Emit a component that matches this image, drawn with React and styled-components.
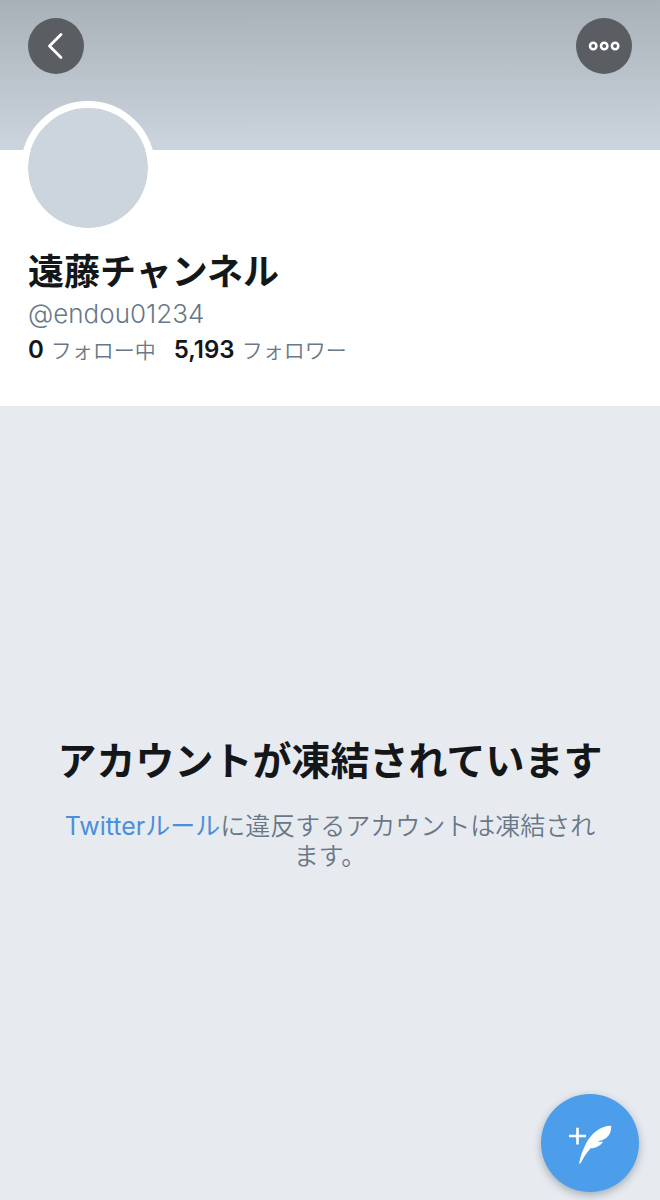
import React from "react";
import styled, { createGlobalStyle } from "styled-components";

const GlobalStyle = createGlobalStyle`
  *, *::before, *::after { box-sizing: border-box; }
  body {
    margin: 0;
    background: #e7ebf0;
    color: #14171a;
    font-family: Inter, "Noto Sans CJK JP", sans-serif;
  }
`;

const Page = styled.div`
  display: flex;
  flex-direction: column;
  min-height: 100vh;
`;

const Banner = styled.header`
  display: flex;
  justify-content: space-between;
  align-items: flex-start;
  height: 150px;
  padding: 18px 28px;
  background: linear-gradient(#a8b0b8, #ccd4dd);
`;

const RoundButton = styled.button`
  display: flex;
  align-items: center;
  justify-content: center;
  width: 56px;
  height: 56px;
  padding: 0;
  border: 0;
  border-radius: 50%;
  background: #5a5e62;
  color: #fff;
  cursor: pointer;
`;

const Profile = styled.section`
  padding: 0 28px 37px;
  background: #fff;
`;

const Avatar = styled.div`
  width: 134px;
  height: 134px;
  margin: -49px 0 0 -7px;
  border: 7px solid #fff;
  border-radius: 50%;
  background: #ccd4dd;
  background-clip: padding-box;
`;

const Name = styled.h1`
  margin: 13px 0 0;
  font-size: 36px;
  line-height: 48px;
  font-weight: 700;
`;

const Handle = styled.p`
  margin: 0;
  color: #697887;
  font-size: 26px;
  line-height: 36px;
  font-weight: 350;
`;

const Stats = styled.div`
  display: flex;
  flex-wrap: wrap;
  gap: 18px;
`;

const Stat = styled.a`
  display: flex;
  gap: 7px;
  align-items: baseline;
  color: #697887;
  font-size: 21px;
  line-height: 36px;
  font-weight: 350;
  text-decoration: none;
`;

const Count = styled.strong`
  color: #14171a;
  font-size: 24px;
  font-weight: 600;
`;

const Notice = styled.main`
  display: flex;
  flex: 1;
  flex-direction: column;
  align-items: center;
  justify-content: center;
  gap: 26px;
  padding: 26px 56px 24px;
  text-align: center;
`;

const NoticeTitle = styled.h2`
  margin: 0;
  font-size: 39px;
  line-height: 48px;
  font-weight: 700;
`;

const NoticeText = styled.p`
  margin: 0;
  color: #697887;
  font-size: 25px;
  line-height: 30px;
  font-weight: 350;
`;

const RulesLink = styled.a`
  color: #4a90d9;
  font-weight: 400;
  text-decoration: none;
`;

const ComposeButton = styled(RoundButton)`
  position: fixed;
  right: 21px;
  bottom: 8px;
  width: 98px;
  height: 98px;
  background: #4c9eeb;
  box-shadow: 0 3px 8px rgba(60, 75, 90, 0.4);
`;

const BackIcon = () => (
  <svg width="56" height="56" viewBox="0 0 56 56" fill="none" aria-hidden="true">
    <path
      d="M33 16.5 21.5 28 33 39.5"
      stroke="currentColor"
      strokeWidth="2.8"
      strokeLinecap="round"
      strokeLinejoin="round"
    />
  </svg>
);

const MoreIcon = () => (
  <svg width="56" height="56" viewBox="0 0 56 56" fill="none" aria-hidden="true">
    <g stroke="currentColor" strokeWidth="2.5">
      <circle cx="17.2" cy="28" r="3.2" />
      <circle cx="28.2" cy="28" r="3.2" />
      <circle cx="39.1" cy="28" r="3.2" />
    </g>
  </svg>
);

const ComposeIcon = () => (
  <svg width="98" height="98" viewBox="0 0 98 98" fill="none" aria-hidden="true">
    <path d="M28 42H45M36.5 33.7V50.4" stroke="currentColor" strokeWidth="2.6" />
    <path
      d="M69.6 31.8C64.6 31.8 59.5 33.8 55.4 37C51 40.4 47.8 44.2 45.6 48.4C41.8 55.4 39.4 62 38.3 68.6C38.1 70 39.1 70.3 39.7 69.1C42.4 63.8 45.6 58.6 49.6 54.2C54.8 54.3 59.2 51.8 62.2 47.4C60.3 48.1 58.4 47.9 56.8 46.9C60.2 46.9 63 45.8 65.4 43.8C68.9 40.9 70.3 37.3 70.3 32.6C70.3 32.1 70.1 31.8 69.6 31.8Z"
      fill="currentColor"
    />
  </svg>
);

export default function App() {
  return (
    <Page lang="ja">
      <GlobalStyle />
      <Banner>
        <RoundButton type="button" aria-label="戻る">
          <BackIcon />
        </RoundButton>
        <RoundButton type="button" aria-label="その他">
          <MoreIcon />
        </RoundButton>
      </Banner>
      <Profile>
        <Avatar />
        <Name>遠藤チャンネル</Name>
        <Handle>@endou01234</Handle>
        <Stats>
          <Stat href="#following">
            <Count>0</Count>
            <span>フォロー中</span>
          </Stat>
          <Stat href="#followers">
            <Count>5,193</Count>
            <span>フォロワー</span>
          </Stat>
        </Stats>
      </Profile>
      <Notice>
        <NoticeTitle>アカウントが凍結されています</NoticeTitle>
        <NoticeText>
          <RulesLink href="#rules">Twitterルール</RulesLink>
          に違反するアカウントは凍結されます。
        </NoticeText>
      </Notice>
      <ComposeButton type="button" aria-label="ツイートする">
        <ComposeIcon />
      </ComposeButton>
    </Page>
  );
}
